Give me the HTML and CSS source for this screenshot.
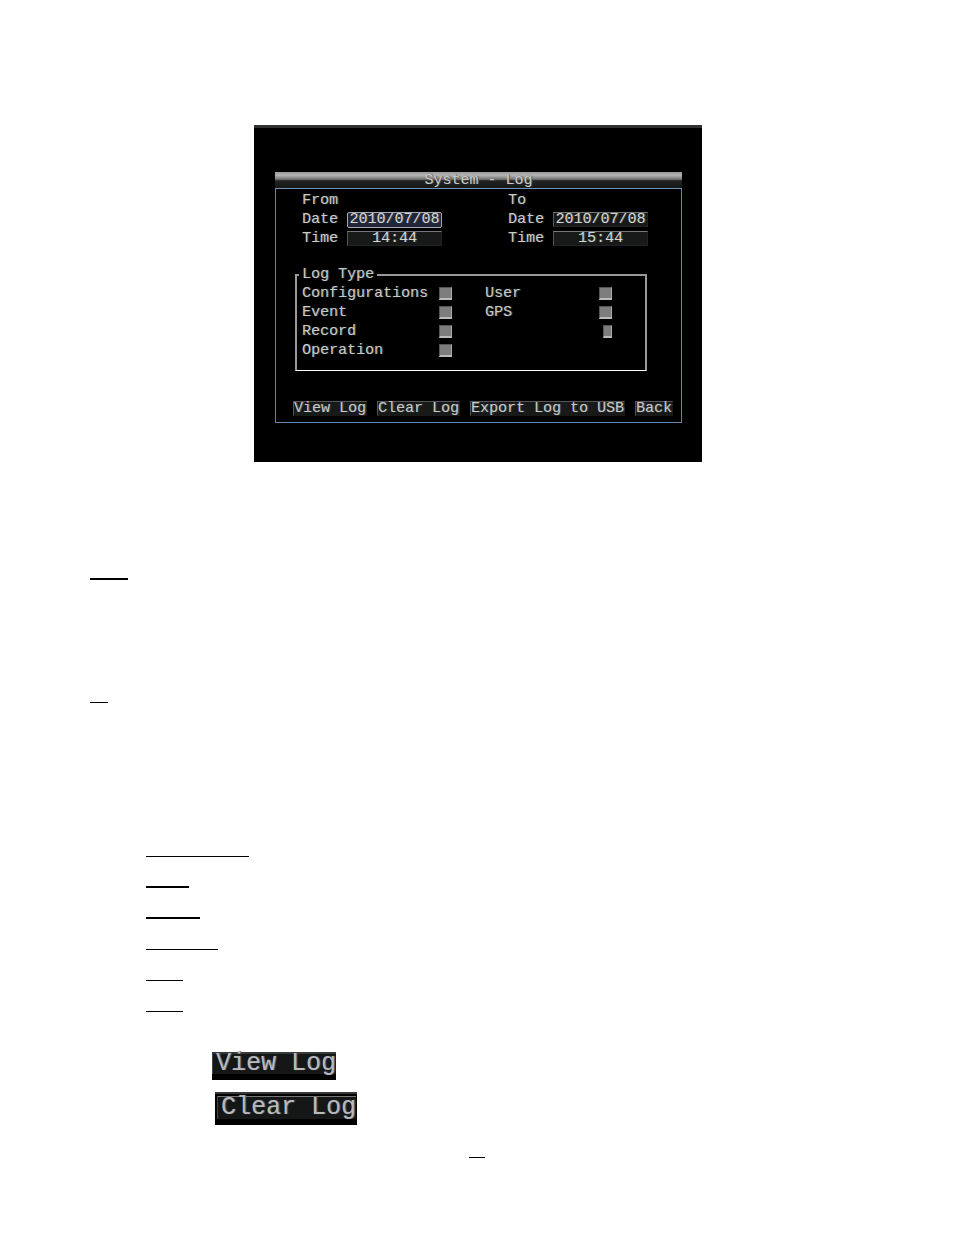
FILE: index.html
```
<!DOCTYPE html>
<html lang="en">
<head>
    <meta charset="UTF-8">
    <title>System - Log</title>
    <link rel="stylesheet" href="styles.css">
</head>
<body>
<main class="page">
    <section class="screen">
        <form class="panel">
            <h1 class="panel-title">System - Log</h1>
            <div class="panel-body">
                <div class="ranges">
                    <div class="range">
                        <span class="range-name">From</span>
                        <label for="fromDate">Date</label>
                        <input class="field field-active" type="text" id="fromDate" value="2010/07/08">
                        <label for="fromTime">Time</label>
                        <input class="field" type="text" id="fromTime" value="14:44">
                    </div>
                    <div class="range">
                        <span class="range-name">To</span>
                        <label for="toDate">Date</label>
                        <input class="field" type="text" id="toDate" value="2010/07/08">
                        <label for="toTime">Time</label>
                        <input class="field" type="text" id="toTime" value="15:44">
                    </div>
                </div>

                <fieldset class="log-type">
                    <legend>Log Type</legend>
                    <div class="types">
                        <label for="configurations">Configurations</label>
                        <input class="check" type="checkbox" id="configurations">
                        <label class="second" for="user">User</label>
                        <input class="check" type="checkbox" id="user">
                        <label for="event">Event</label>
                        <input class="check" type="checkbox" id="event">
                        <label class="second" for="gps">GPS</label>
                        <input class="check" type="checkbox" id="gps">
                        <label for="record">Record</label>
                        <input class="check" type="checkbox" id="record">
                        <label class="second" for="other"></label>
                        <input class="check check-narrow" type="checkbox" id="other">
                        <label for="operation">Operation</label>
                        <input class="check" type="checkbox" id="operation">
                    </div>
                </fieldset>

                <div class="actions">
                    <button class="btn" type="button">View Log</button>
                    <button class="btn" type="button">Clear Log</button>
                    <button class="btn" type="button">Export Log to USB</button>
                    <button class="btn" type="button">Back</button>
                </div>
            </div>
        </form>
    </section>

    <!-- Underlined blanks -->
    <div class="blank blank-from"></div>
    <div class="blank blank-to"></div>
    <div class="blank-list">
        <div class="blank blank-configurations"></div>
        <div class="blank blank-event"></div>
        <div class="blank blank-record"></div>
        <div class="blank blank-operation"></div>
        <div class="blank blank-short"></div>
        <div class="blank blank-short"></div>
    </div>

    <div class="samples">
        <button class="sample sample-view" type="button"><span>View Log</span></button>
        <button class="sample sample-clear" type="button"><span>Clear Log</span></button>
    </div>
</main>
<footer class="page-number"></footer>
</body>
</html>
```

FILE: styles.css
```
* {
    box-sizing: border-box;
}
body {
    margin: 0;
    background-color: #fff;
    font-family: "Liberation Mono", monospace;
    font-size: 15px;
    line-height: 19px;
    color: #c9c9c5;
}
.page {
    padding: 125px 90px 0;
}

/* Recorder screen */
.screen {
    max-width: 448px;
    margin-left: 164px;
    padding: 44px 20px 39px 21px;
    border-top: 3px solid #303232;
    background-color: #000;
}
.panel {
    border: 1px solid #5f86b0;
    border-top: none;
    text-shadow: 1px 0 1px #555;
}
.panel-title {
    margin: 0 -1px;
    padding-top: 1px;
    border-bottom: 1px solid #7192b5;
    background: linear-gradient(#999 0, #b5b5b5 20%, #777 45%, #222 55%, #161818 100%);
    font-size: 15px;
    font-weight: normal;
    line-height: 15px;
    text-align: center;
}
.panel-body {
    padding: 2px 8px 6px 17px;
}
.ranges {
    display: flex;
    gap: 66px;
    padding-left: 9px;
}
.range {
    display: grid;
    grid-template-columns: 45px 95px;
    grid-auto-rows: 19px;
    align-items: center;
}
.range-name {
    grid-column: 1 / 3;
}
.field {
    width: 100%;
    height: 15px;
    padding: 0;
    border: 1px solid #222;
    border-top-color: #777;
    border-left-color: #555;
    background-color: #181a1a;
    color: #d4d4d0;
    font: inherit;
    line-height: 13px;
    text-align: center;
    text-shadow: inherit;
}
.field-active {
    height: 16px;
    border-color: #a5a8b0;
    border-radius: 2px;
    background-color: #20253a;
}

/* Log types */
.log-type {
    margin: 17px 26px 0 2px;
    padding: 0 5px 10px;
    border: 2px solid #999;
    border-bottom: 1px solid #fff;
}
.log-type legend {
    margin-left: -3px;
    padding: 0 3px;
}
.types {
    display: grid;
    grid-template-columns: 137px 13px 147px 13px;
    grid-auto-rows: 19px;
    align-items: center;
}
.second {
    padding-left: 33px;
}
.check {
    appearance: none;
    width: 13px;
    height: 13px;
    margin: 0;
    border: 1px solid #555;
    border-right-color: #aaa;
    border-bottom: 2px solid #bbb;
    background-color: #7d7d7d;
}
.check-narrow {
    width: 9px;
    justify-self: end;
}
.actions {
    display: flex;
    gap: 10px;
    margin-top: 30px;
}
.btn {
    padding: 0;
    border: 1px solid #181a1a;
    border-top-color: #555;
    border-left-color: #555;
    background-color: #181a1a;
    color: inherit;
    font: inherit;
    line-height: 13px;
    text-shadow: inherit;
    white-space: nowrap;
}

/* Blanks */
.blank {
    border-bottom: 1px solid #000;
}
.blank-from {
    width: 38px;
    margin-top: 116px;
    border-bottom-width: 2px;
}
.blank-to {
    width: 18px;
    margin-top: 122px;
}
.blank-list {
    margin-top: 123px;
    padding-left: 56px;
}
.blank-list .blank {
    height: 31px;
}
.blank-configurations {
    width: 103px;
}
.blank-event {
    width: 43px;
}
.blank-record {
    width: 54px;
}
.blank-list .blank-event,
.blank-list .blank-record {
    border-bottom-width: 2px;
}
.blank-operation {
    width: 72px;
}
.blank-short {
    width: 37px;
}

/* Enlarged buttons */
.samples {
    display: flex;
    flex-direction: column;
    align-items: flex-start;
    gap: 12px;
    margin-top: 40px;
    padding-left: 122px;
}
.sample {
    padding: 0;
    border: none;
    border-top: 2px solid #383a3a;
    background-color: #000;
    color: #bab8bb;
    font: inherit;
    font-size: 25px;
    line-height: 20px;
    text-shadow: 1px 0 1px #666;
    white-space: nowrap;
}
.sample span {
    display: block;
    padding-left: 3px;
    border-left: 1px solid #444;
    background-color: #151616;
}
.sample-view {
    padding-bottom: 6px;
}
.sample-clear {
    margin-left: 3px;
    padding: 2px 1px 6px 2px;
}
.sample-clear span {
    border-top: 1px solid #777;
    line-height: 22px;
}
.page-number {
    width: 16px;
    margin: 32px auto 0;
    border-bottom: 1px solid #000;
}
```
